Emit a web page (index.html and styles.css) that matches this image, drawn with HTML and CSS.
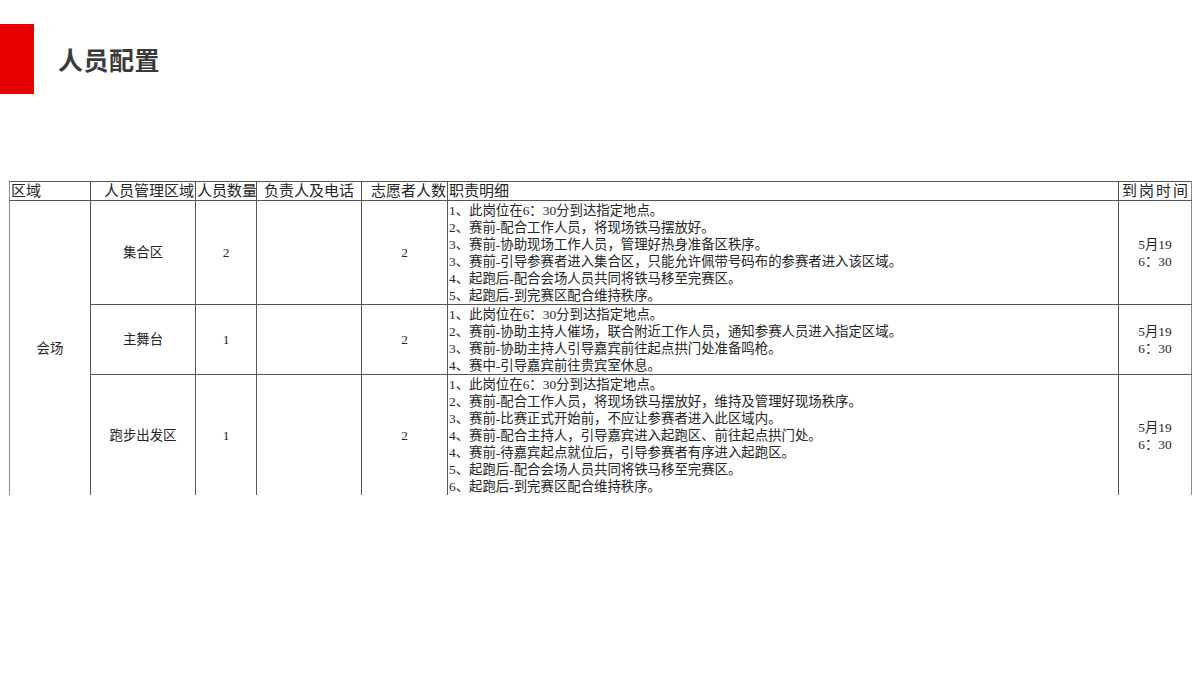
FILE: index.html
```html
<!DOCTYPE html>
<html lang="zh-CN">
<head>
<meta charset="utf-8">
<title>人员配置</title>
<link rel="stylesheet" href="styles.css">
</head>
<body>
<div class="page">
  <header class="head">
    <div class="bar"></div>
    <h1 class="title">人员配置</h1>
  </header>
  <div class="sheet">
    <table class="grid">
      <colgroup>
        <col class="c1"><col class="c2"><col class="c3"><col class="c4"><col class="c5"><col class="c6"><col class="c7">
      </colgroup>
      <thead>
        <tr class="hrow">
          <th class="left">区域</th>
          <th class="right">人员管理区域</th>
          <th>人员数量</th>
          <th>负责人及电话</th>
          <th class="right">志愿者人数</th>
          <th class="left">职责明细</th>
          <th class="spread">到岗时间</th>
        </tr>
      </thead>
      <tbody>
        <tr class="r1">
          <td rowspan="3" class="mid">会场</td>
          <td class="mid">集合区</td>
          <td class="mid">2</td>
          <td></td>
          <td class="mid">2</td>
          <td class="duty">
            <div class="ln">1、此岗位在6：30分到达指定地点。</div>
            <div class="ln">2、赛前-配合工作人员，将现场铁马摆放好。</div>
            <div class="ln">3、赛前-协助现场工作人员，管理好热身准备区秩序。</div>
            <div class="ln">3、赛前-引导参赛者进入集合区，只能允许佩带号码布的参赛者进入该区域。</div>
            <div class="ln">4、起跑后-配合会场人员共同将铁马移至完赛区。</div>
            <div class="ln">5、起跑后-到完赛区配合维持秩序。</div>
          </td>
          <td class="mid"><div class="ln">5月19</div><div class="ln">6：30</div></td>
        </tr>
        <tr class="r2">
          <td class="mid">主舞台</td>
          <td class="mid">1</td>
          <td></td>
          <td class="mid">2</td>
          <td class="duty">
            <div class="ln">1、此岗位在6：30分到达指定地点。</div>
            <div class="ln">2、赛前-协助主持人催场，联合附近工作人员，通知参赛人员进入指定区域。</div>
            <div class="ln">3、赛前-协助主持人引导嘉宾前往起点拱门处准备鸣枪。</div>
            <div class="ln">4、赛中-引导嘉宾前往贵宾室休息。</div>
          </td>
          <td class="mid"><div class="ln">5月19</div><div class="ln">6：30</div></td>
        </tr>
        <tr class="r3">
          <td class="mid">跑步出发区</td>
          <td class="mid">1</td>
          <td></td>
          <td class="mid">2</td>
          <td class="duty">
            <div class="ln">1、此岗位在6：30分到达指定地点。</div>
            <div class="ln">2、赛前-配合工作人员，将现场铁马摆放好，维持及管理好现场秩序。</div>
            <div class="ln">3、赛前-比赛正式开始前，不应让参赛者进入此区域内。</div>
            <div class="ln">4、赛前-配合主持人，引导嘉宾进入起跑区、前往起点拱门处。</div>
            <div class="ln">4、赛前-待嘉宾起点就位后，引导参赛者有序进入起跑区。</div>
            <div class="ln">5、起跑后-配合会场人员共同将铁马移至完赛区。</div>
            <div class="ln">6、起跑后-到完赛区配合维持秩序。</div>
          </td>
          <td class="mid"><div class="ln">5月19</div><div class="ln">6：30</div></td>
        </tr>
      </tbody>
    </table>
  </div>
</div>
</body>
</html>
```

FILE: styles.css
```css
* { box-sizing: border-box; }
html, body {
  margin: 0;
  padding: 0;
  background: #ffffff;
}
.page {
  width: 1200px;
  height: 675px;
  overflow: hidden;
  font-family: "Liberation Serif", "Noto Sans CJK SC", serif;
  color: #252525;
}
.head {
  display: flex;
  align-items: center;
  padding-top: 24px;
  height: 94px;
}
.bar {
  width: 34px;
  height: 70px;
  background: #e60000;
  flex: none;
}
.title {
  margin: 0 0 0 24px;
  font-family: "Noto Sans CJK SC", sans-serif;
  font-weight: 700;
  font-size: 25px;
  letter-spacing: 0.5px;
  color: #3a3a3a;
}
.sheet {
  margin: 87px 0 0 9px;
  width: 1183px;
  height: 314px;
  overflow: hidden;
}
.grid {
  width: 1182px;
  border-collapse: collapse;
  table-layout: fixed;
  font-size: 13.4px;
}
.c1 { width: 81px; }
.c2 { width: 105px; }
.c3 { width: 61px; }
.c4 { width: 105px; }
.c5 { width: 86px; }
.c6 { width: 671px; }
.c7 { width: 73px; }
.grid th, .grid td {
  border: 1px solid #555555;
  padding: 0 2px;
  vertical-align: middle;
}
.grid tr > :first-child { border-left-color: #8a8a8a; }
.grid tr > :last-child { border-right-color: #8a8a8a; }
.grid th {
  font-weight: 400;
  font-size: 15px;
  height: 19px;
  line-height: 17px;
  text-align: center;
  white-space: nowrap;
  padding: 0 1px;
}
.grid th.left { text-align: left; }
.grid th.right { text-align: right; }
.grid th.spread { letter-spacing: 2px; text-align: center; padding-left: 3px; }
.grid td.mid { text-align: center; line-height: 17px; }
.grid td.duty {
  padding: 1px 1px 0 1px;
  white-space: nowrap;
  vertical-align: top;
}
.ln {
  height: 17px;
  line-height: 17.2px;
  overflow: visible;
  white-space: nowrap;
}
.r1 { height: 104px; }
.r2 { height: 70px; }
.r3 { height: 122px; }
```
